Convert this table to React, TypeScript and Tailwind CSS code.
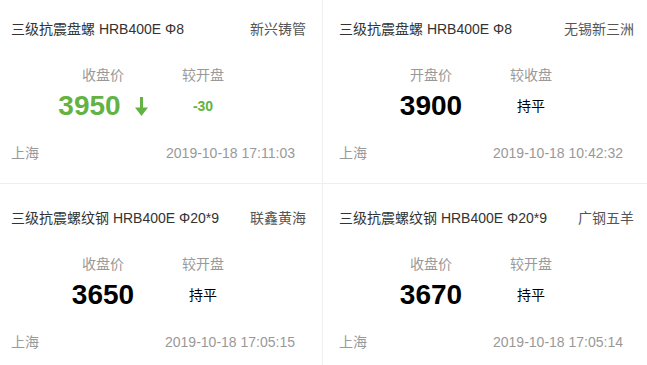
import { FC } from "react";

interface IQuoteCard {
  title: string;
  factory: string;
  priceLabel: string;
  compareLabel: string;
  price: string;
  change: string;
  down?: boolean;
  city: string;
  time: string;
}

const quotes: IQuoteCard[] = [
  {
    title: "三级抗震盘螺 HRB400E Φ8",
    factory: "新兴铸管",
    priceLabel: "收盘价",
    compareLabel: "较开盘",
    price: "3950",
    change: "-30",
    down: true,
    city: "上海",
    time: "2019-10-18 17:11:03",
  },
  {
    title: "三级抗震盘螺 HRB400E Φ8",
    factory: "无锡新三洲",
    priceLabel: "开盘价",
    compareLabel: "较收盘",
    price: "3900",
    change: "持平",
    city: "上海",
    time: "2019-10-18 10:42:32",
  },
  {
    title: "三级抗震螺纹钢 HRB400E Φ20*9",
    factory: "联鑫黄海",
    priceLabel: "收盘价",
    compareLabel: "较开盘",
    price: "3650",
    change: "持平",
    city: "上海",
    time: "2019-10-18 17:05:15",
  },
  {
    title: "三级抗震螺纹钢 HRB400E Φ20*9",
    factory: "广钢五羊",
    priceLabel: "收盘价",
    compareLabel: "较开盘",
    price: "3670",
    change: "持平",
    city: "上海",
    time: "2019-10-18 17:05:14",
  },
];

const DownArrow = () => (
  <svg width="13" height="19" viewBox="0 0 13 19" className="ml-[14px]">
    <rect x="5" y="0" width="3" height="12" fill="currentColor" />
    <polygon points="0,10.5 13,10.5 6.5,19" fill="currentColor" />
  </svg>
);

const QuoteCard: FC<{ q: IQuoteCard; className: string }> = ({ q, className }) => {
  return (
    <div className={className}>
      <div className="flex h-5 items-center justify-between text-[14px] leading-5">
        <span className="text-[#333]">{q.title}</span>
        <span className="text-[#555]">{q.factory}</span>
      </div>
      <div className="mt-[26px] flex pl-[42px] text-[14px] leading-5 text-[#999]">
        <div className="w-[100px] text-center">{q.priceLabel}</div>
        <div className="w-[100px] text-center">{q.compareLabel}</div>
      </div>
      <div className="mt-[5px] flex h-8 items-center pl-[42px]">
        <div
          className={`flex w-[100px] items-center justify-center text-[28px] font-bold leading-8 ${
            q.down ? "text-[#63b343]" : "text-black"
          }`}
        >
          {q.price}
          {q.down && <DownArrow />}
        </div>
        <div
          className={`w-[100px] text-center text-[14px] leading-5 ${
            q.down ? "font-bold text-[#63b343]" : "text-black"
          }`}
        >
          {q.change}
        </div>
      </div>
      <div className="mt-[21px] flex h-5 items-center justify-between text-[14px] leading-5 text-[#999]">
        <span>{q.city}</span>
        <span className="mr-[11px]">{q.time}</span>
      </div>
    </div>
  );
};

export default function App() {
  return (
    <div
      className="h-[365px] w-[647px] overflow-hidden bg-white"
      style={{ fontFamily: '"Liberation Sans", "Noto Sans CJK SC", sans-serif' }}
    >
      <div className="flex">
        <QuoteCard
          q={quotes[0]}
          className="h-[184px] w-[323px] border-b border-r border-[#eee] pl-[11px] pr-[16px] pt-[19px]"
        />
        <QuoteCard
          q={quotes[1]}
          className="h-[184px] w-[324px] border-b border-[#eee] pl-[16px] pr-[13px] pt-[19px]"
        />
      </div>
      <div className="flex">
        <QuoteCard
          q={quotes[2]}
          className="h-[181px] w-[323px] border-r border-[#eee] pl-[11px] pr-[16px] pt-[24px]"
        />
        <QuoteCard
          q={quotes[3]}
          className="h-[181px] w-[324px] pl-[16px] pr-[13px] pt-[24px]"
        />
      </div>
    </div>
  );
}
